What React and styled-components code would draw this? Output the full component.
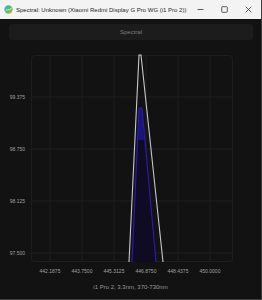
import React from 'react';
import styled, { createGlobalStyle } from 'styled-components';

const GlobalStyle = createGlobalStyle`
  html, body {
    margin: 0;
    padding: 0;
    background: #121212;
  }
  * {
    box-sizing: border-box;
  }
`;

const Window = styled.div`
  width: 262px;
  height: 300px;
  display: flex;
  flex-direction: column;
  border-right: 1px solid #3c3c3c;
  border-bottom: 1px solid #3c3c3c;
  font-family: 'Liberation Sans', Arial, sans-serif;
  overflow: hidden;
`;

const TitleBar = styled.div`
  height: 19px;
  flex: none;
  display: flex;
  align-items: center;
  background: #f3f3f3;
  padding-left: 4px;
`;

const TitleText = styled.span`
  flex: 1;
  margin-left: 3px;
  font-size: 6px;
  color: #1f1f1f;
  white-space: nowrap;
`;

const Controls = styled.div`
  display: flex;
  align-items: center;
  gap: 17px;
  padding-right: 9px;
`;

const Body = styled.div`
  flex: 1;
  display: flex;
  flex-direction: column;
  background: #121212;
`;

const ModeButton = styled.div`
  height: 16px;
  margin: 5px 8px 0 9px;
  border-radius: 4px;
  background: #1c1c1c;
  color: #7c7c7c;
  font-size: 6px;
  display: flex;
  align-items: center;
  justify-content: center;
`;

const Chart = styled.svg`
  display: block;
  width: 261px;
  height: 236px;
  margin-top: 4px;
`;

const Caption = styled.div`
  margin-top: 3px;
  text-align: center;
  font-size: 6px;
  line-height: 8px;
  color: #9a9a9a;
`;

const yTicks = [
  { y: 97, label: '99.375' },
  { y: 149, label: '98.750' },
  { y: 201, label: '98.125' },
  { y: 253, label: '97.500' },
];

const xTicks = [
  { x: 50, label: '442.1875' },
  { x: 82, label: '443.7500' },
  { x: 114, label: '445.3125' },
  { x: 146, label: '446.8750' },
  { x: 178, label: '448.4375' },
  { x: 210, label: '450.0000' },
];

function AppIcon() {
  return (
    <svg width="9" height="9" viewBox="0 0 10 10">
      <defs>
        <linearGradient id="globe" x1="0" y1="0" x2="1" y2="1">
          <stop offset="0" stopColor="#3fa9f5" />
          <stop offset="0.5" stopColor="#4cc36a" />
          <stop offset="1" stopColor="#f0a030" />
        </linearGradient>
      </defs>
      <circle cx="5" cy="5" r="4.6" fill="url(#globe)" />
      <path d="M2 6.5 C4 4, 6 7, 8.5 3" stroke="#ffffff" strokeWidth="1" fill="none" opacity="0.8" />
    </svg>
  );
}

function WindowControls() {
  return (
    <Controls>
      <svg width="7" height="7" viewBox="0 0 7 7">
        <line x1="0.5" y1="3.5" x2="6.5" y2="3.5" stroke="#333" strokeWidth="0.8" />
      </svg>
      <svg width="7" height="7" viewBox="0 0 7 7">
        <rect x="0.7" y="0.7" width="5.6" height="5.6" rx="0.8" stroke="#333" strokeWidth="0.8" fill="none" />
      </svg>
      <svg width="7" height="7" viewBox="0 0 7 7">
        <path d="M0.7 0.7 L6.3 6.3 M6.3 0.7 L0.7 6.3" stroke="#333" strokeWidth="0.8" />
      </svg>
    </Controls>
  );
}

function SpectrumChart() {
  return (
    <Chart viewBox="0 44 261 236">
      {xTicks.map((t) => (
        <line key={t.label} x1={t.x} y1="55" x2={t.x} y2="262" stroke="#1e1e1e" strokeWidth="1" />
      ))}
      {yTicks.map((t) => (
        <line key={t.label} x1="31" y1={t.y} x2="233" y2={t.y} stroke="#1e1e1e" strokeWidth="1" />
      ))}
      <rect x="31.5" y="55.5" width="201" height="206" rx="3" fill="none" stroke="#1e1e1e" strokeWidth="1" />

      <polygon points="139,108 142,108 156,262 132,262" fill="#0e0b22" />
      <polygon points="139,108 142,108 144,140 137.5,140" fill="#221790" opacity="0.8" />
      <polyline points="132,262 139,108 142,108 156,262" fill="none" stroke="#2a1ca8" strokeWidth="1.2" />
      <polyline points="129,262 139,55 141,55 163,262" fill="none" stroke="#c8c8c8" strokeWidth="1.1" />

      {yTicks.map((t) => (
        <text key={t.label} x="25" y={t.y + 2} textAnchor="end" fontSize="5" fill="#a0a0a0" fontFamily="Liberation Sans, Arial, sans-serif">
          {t.label}
        </text>
      ))}
      {xTicks.map((t) => (
        <text key={t.label} x={t.x} y="273" textAnchor="middle" fontSize="5" fill="#a0a0a0" fontFamily="Liberation Sans, Arial, sans-serif">
          {t.label}
        </text>
      ))}
    </Chart>
  );
}

export default function App() {
  return (
    <>
      <GlobalStyle />
      <Window>
        <TitleBar>
          <AppIcon />
          <TitleText>Spectral: Unknown (Xiaomi Redmi Display G Pro WG (i1 Pro 2))</TitleText>
          <WindowControls />
        </TitleBar>
        <Body>
          <ModeButton>Spectral</ModeButton>
          <SpectrumChart />
          <Caption>i1 Pro 2, 3.3nm, 370-730nm</Caption>
        </Body>
      </Window>
    </>
  );
}
